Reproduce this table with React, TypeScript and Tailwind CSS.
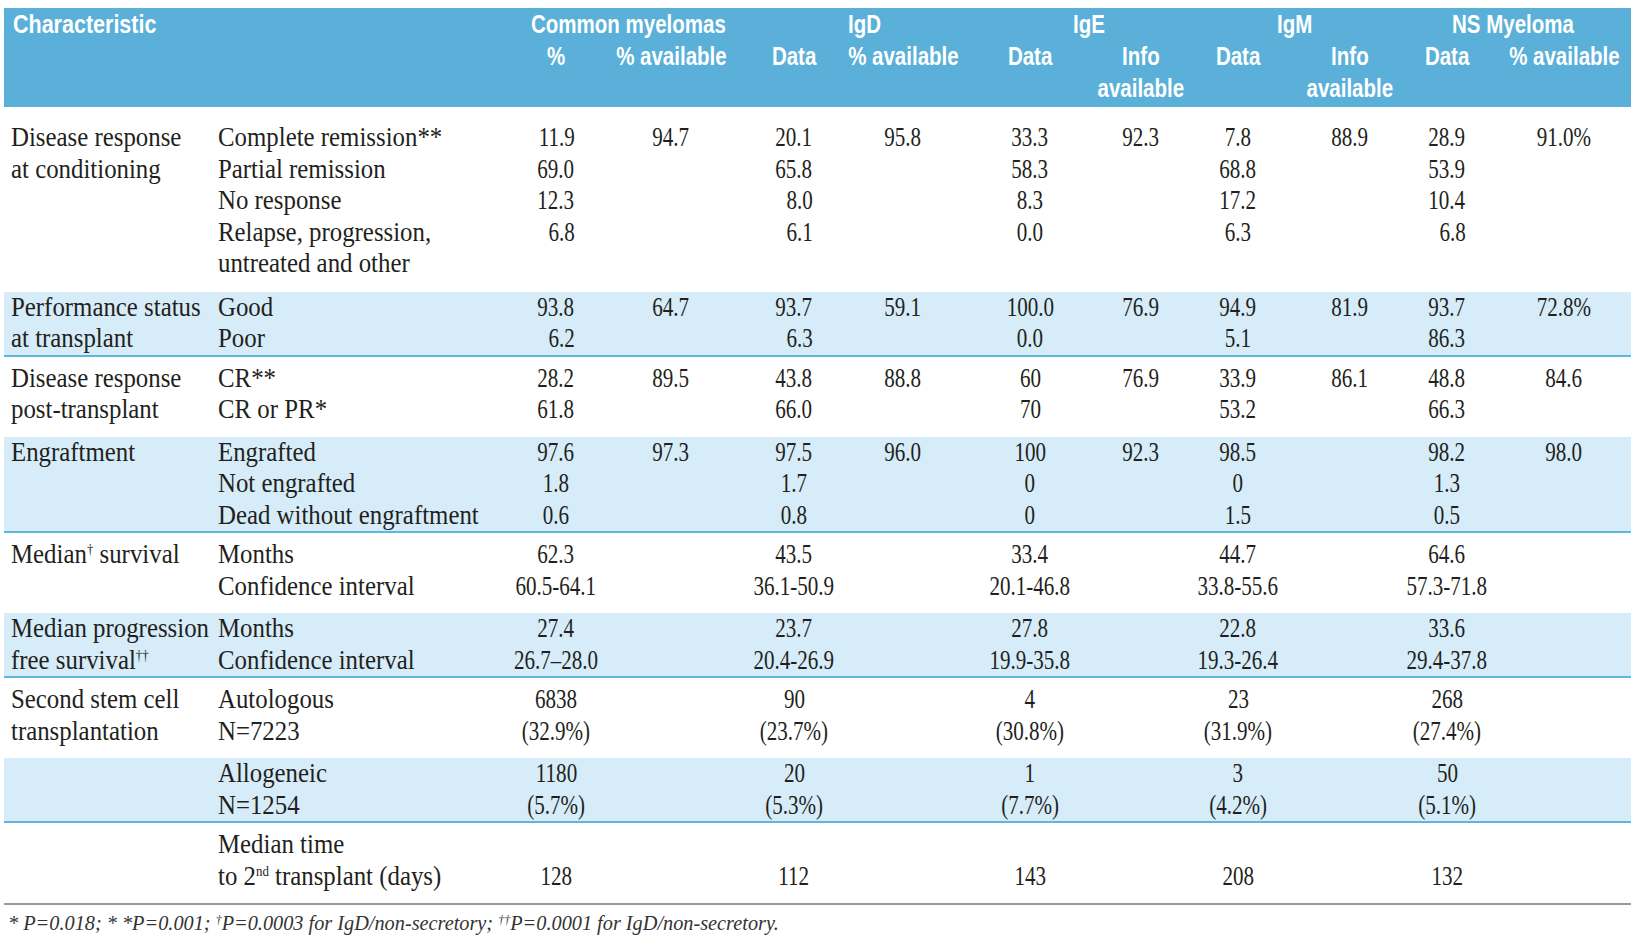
import type { ReactNode } from "react";

const GRID =
  "grid grid-cols-[209px_285px_116px_114px_132px_86px_168px_54px_140px_84px_110px_124px_1fr]";

type Row = {
  label?: ReactNode;
  sub?: ReactNode;
  vals?: string[];
  dec?: boolean;
};

type Group = {
  blue?: boolean;
  pad: string;
  rows: Row[];
};

// small raised marks (daggers, ordinals) that must not grow the line box
const Sup = ({ children }: { children: ReactNode }) => (
  <span className="relative -top-[9px] text-[14px] leading-none">{children}</span>
);

const GROUPS: Group[] = [
  {
    pad: "pt-[15px] pb-[12px]",
    rows: [
      {
        label: "Disease response",
        sub: "Complete remission**",
        vals: ["11.9", "94.7", "20.1", "95.8", "33.3", "92.3", "7.8", "88.9", "28.9", "91.0%"],
        dec: true,
      },
      {
        label: "at conditioning",
        sub: "Partial remission",
        vals: ["69.0", "", "65.8", "", "58.3", "", "68.8", "", "53.9", ""],
        dec: true,
      },
      {
        sub: "No response",
        vals: ["12.3", "", "8.0", "", "8.3", "", "17.2", "", "10.4", ""],
        dec: true,
      },
      {
        sub: "Relapse, progression,",
        vals: ["6.8", "", "6.1", "", "0.0", "", "6.3", "", "6.8", ""],
        dec: true,
      },
      { sub: "untreated and other" },
    ],
  },
  {
    blue: true,
    pad: "",
    rows: [
      {
        label: "Performance status",
        sub: "Good",
        vals: ["93.8", "64.7", "93.7", "59.1", "100.0", "76.9", "94.9", "81.9", "93.7", "72.8%"],
        dec: true,
      },
      {
        label: "at transplant",
        sub: "Poor",
        vals: ["6.2", "", "6.3", "", "0.0", "", "5.1", "", "86.3", ""],
        dec: true,
      },
    ],
  },
  {
    pad: "pt-[6px] pb-[11px]",
    rows: [
      {
        label: "Disease response",
        sub: "CR**",
        vals: ["28.2", "89.5", "43.8", "88.8", "60", "76.9", "33.9", "86.1", "48.8", "84.6"],
      },
      {
        label: "post-transplant",
        sub: "CR or PR*",
        vals: ["61.8", "", "66.0", "", "70", "", "53.2", "", "66.3", ""],
      },
    ],
  },
  {
    blue: true,
    pad: "",
    rows: [
      {
        label: "Engraftment",
        sub: "Engrafted",
        vals: ["97.6", "97.3", "97.5", "96.0", "100", "92.3", "98.5", "", "98.2", "98.0"],
      },
      {
        sub: "Not engrafted",
        vals: ["1.8", "", "1.7", "", "0", "", "0", "", "1.3", ""],
      },
      {
        sub: "Dead without engraftment",
        vals: ["0.6", "", "0.8", "", "0", "", "1.5", "", "0.5", ""],
      },
    ],
  },
  {
    pad: "pt-[6px] pb-[11px]",
    rows: [
      {
        label: (
          <>
            Median<Sup>†</Sup> survival
          </>
        ),
        sub: "Months",
        vals: ["62.3", "", "43.5", "", "33.4", "", "44.7", "", "64.6", ""],
      },
      {
        sub: "Confidence interval",
        vals: ["60.5-64.1", "", "36.1-50.9", "", "20.1-46.8", "", "33.8-55.6", "", "57.3-71.8", ""],
      },
    ],
  },
  {
    blue: true,
    pad: "",
    rows: [
      {
        label: "Median progression",
        sub: "Months",
        vals: ["27.4", "", "23.7", "", "27.8", "", "22.8", "", "33.6", ""],
      },
      {
        label: (
          <>
            free survival<Sup>††</Sup>
          </>
        ),
        sub: "Confidence interval",
        vals: ["26.7–28.0", "", "20.4-26.9", "", "19.9-35.8", "", "19.3-26.4", "", "29.4-37.8", ""],
      },
    ],
  },
  {
    pad: "pt-[6px] pb-[11px]",
    rows: [
      {
        label: "Second stem cell",
        sub: "Autologous",
        vals: ["6838", "", "90", "", "4", "", "23", "", "268", ""],
      },
      {
        label: "transplantation",
        sub: "N=7223",
        vals: ["(32.9%)", "", "(23.7%)", "", "(30.8%)", "", "(31.9%)", "", "(27.4%)", ""],
      },
    ],
  },
  {
    blue: true,
    pad: "",
    rows: [
      {
        sub: "Allogeneic",
        vals: ["1180", "", "20", "", "1", "", "3", "", "50", ""],
      },
      {
        sub: "N=1254",
        vals: ["(5.7%)", "", "(5.3%)", "", "(7.7%)", "", "(4.2%)", "", "(5.1%)", ""],
      },
    ],
  },
  {
    pad: "pt-[6px] pb-[11px]",
    rows: [
      { sub: "Median time" },
      {
        sub: (
          <>
            to 2<Sup>nd</Sup> transplant (days)
          </>
        ),
        vals: ["128", "", "112", "", "143", "", "208", "", "132", ""],
      },
    ],
  },
];

const RIGHT_COLS = [0, 2, 8];

function HeadText({ children }: { children: ReactNode }) {
  return (
    <span className="inline-block origin-left scale-x-82 whitespace-nowrap">
      {children}
    </span>
  );
}

function HeadCell({ children }: { children?: ReactNode }) {
  return (
    <div className="flex min-w-0 justify-center whitespace-nowrap">
      {children && (
        <span className="inline-block origin-center scale-x-82">{children}</span>
      )}
    </div>
  );
}

function Header() {
  const subs = [
    "%",
    "% available",
    "Data",
    "% available",
    "Data",
    "Info",
    "Data",
    "Info",
    "Data",
    "% available",
  ];
  return (
    <div
      className={`${GRID} bg-[#5ab0d8] pb-[3px] font-['Liberation_Sans',Arial,sans-serif] text-[25px] font-bold leading-[32px] text-white`}
    >
      {/* row 1 */}
      <div className="col-span-2 pl-[9px]">
        <span className="inline-block origin-left scale-x-86 whitespace-nowrap">
          Characteristic
        </span>
      </div>
      <div className="col-span-2 pl-[33px]">
        <HeadText>Common myelomas</HeadText>
      </div>
      <div className="col-span-2 pl-[120px]">
        <HeadText>IgD</HeadText>
      </div>
      <div className="col-span-2 pl-[127px]">
        <HeadText>IgE</HeadText>
      </div>
      <div className="col-span-2 pl-[109px]">
        <HeadText>IgM</HeadText>
      </div>
      <div className="col-span-2 pl-[60px]">
        <HeadText>NS Myeloma</HeadText>
      </div>
      <div />

      {/* row 2 */}
      <div className="col-span-2" />
      {subs.map((s, i) => (
        <HeadCell key={i}>{s}</HeadCell>
      ))}
      <div />

      {/* row 3 */}
      <div className="col-span-2" />
      {subs.map((s, i) => (
        <HeadCell key={i}>{s === "Info" ? "available" : null}</HeadCell>
      ))}
      <div />
    </div>
  );
}

function Label({ children }: { children?: ReactNode }) {
  return (
    <div className="min-w-0 whitespace-nowrap">
      {children && (
        <span className="inline-block origin-left scale-x-92">{children}</span>
      )}
    </div>
  );
}

function Num({ v, right }: { v?: string; right?: boolean }) {
  return (
    <div className="flex min-w-0 justify-center whitespace-nowrap">
      {v && (
        <span
          className={`inline-block origin-center scale-x-78 ${
            right ? "min-w-[47px] text-right" : ""
          }`}
        >
          {v}
        </span>
      )}
    </div>
  );
}

export default function App() {
  return (
    <div className="min-h-[951px] w-[1638px] bg-white pt-[8px] pl-[4px] font-['Liberation_Serif','Times_New_Roman',serif] text-[#231f20]">
      <div className="w-[1627px]">
        <Header />

        {GROUPS.map((g, gi) => (
          <div
            key={gi}
            className={`${GRID} text-[27px] leading-[31.5px] ${g.pad} ${
              g.blue ? "border-b-2 border-[#5fb6dc] bg-[#d6ecf9]" : ""
            } ${gi === GROUPS.length - 1 ? "border-b-2 border-[#9a9a9a]" : ""}`}
          >
            {g.rows.map((r, ri) => (
              <div key={ri} className="contents">
                <div className="pl-[7px]">
                  <Label>{r.label}</Label>
                </div>
                <div className="pl-[5px]">
                  <Label>{r.sub}</Label>
                </div>
                {Array.from({ length: 10 }, (_, ci) => (
                  <Num
                    key={ci}
                    v={r.vals?.[ci]}
                    right={r.dec && RIGHT_COLS.includes(ci)}
                  />
                ))}
                <div />
              </div>
            ))}
          </div>
        ))}

        {/* Footnote */}
        <div className="pt-[6px] pl-[4px] text-[20.3px] italic leading-[24px] text-[#333]">
          <span className="whitespace-nowrap">
            * P=0.018; * *P=0.001;{" "}
            <span className="relative -top-[6px] text-[12px] leading-none">†</span>
            P=0.0003 for IgD/non-secretory;{" "}
            <span className="relative -top-[6px] text-[12px] leading-none">††</span>
            P=0.0001 for IgD/non-secretory.
          </span>
        </div>
      </div>
    </div>
  );
}
